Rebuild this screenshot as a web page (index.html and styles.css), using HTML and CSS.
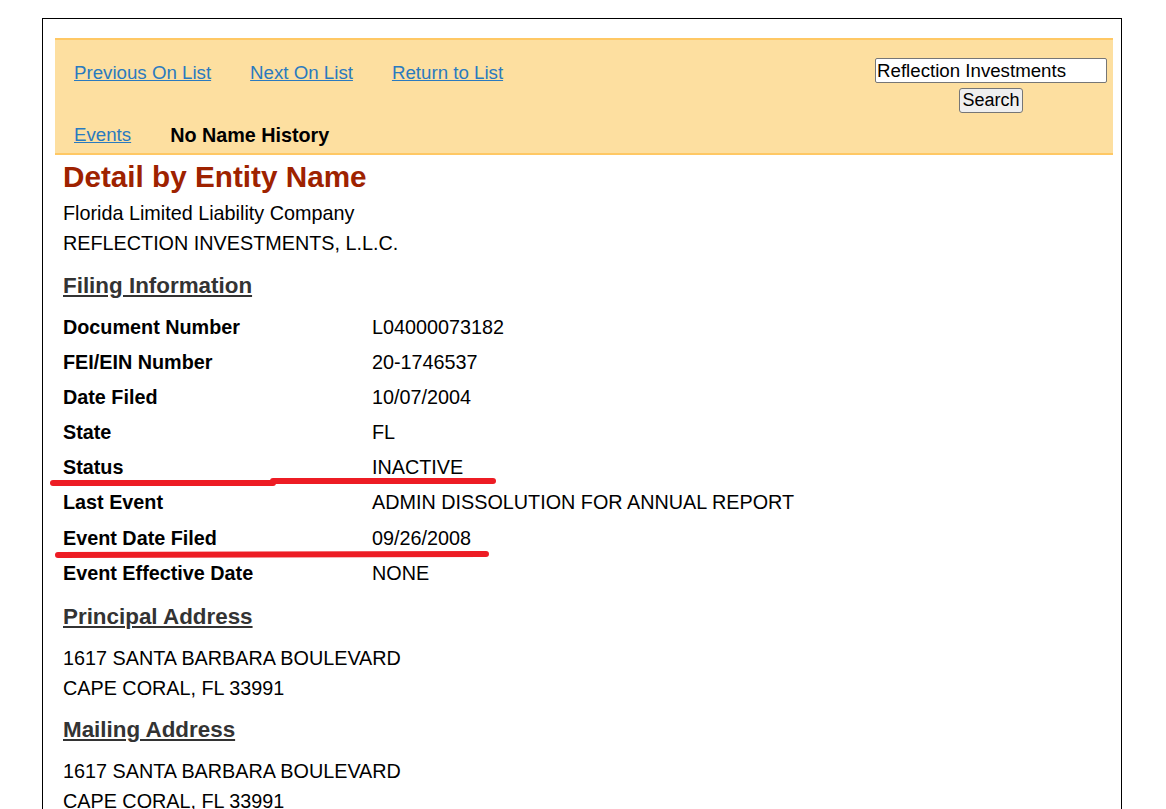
FILE: index.html
```html
<!DOCTYPE html>
<html>
	<head>
		<meta charset="UTF-8">
		<title>Detail by Entity Name</title>
		<link rel="stylesheet" href="styles.css">
	</head>
	<body>
		<div class="wrap">
			<div class="navbar">
				<div class="nav_row">
					<nav class="links">
						<a href="javascript:;">Previous On List</a>
						<a href="javascript:;">Next On List</a>
						<a href="javascript:;">Return to List</a>
					</nav>
					<form class="search" onsubmit="return false;">
						<input type="text" value="Reflection Investments">
						<button type="submit">Search</button>
					</form>
				</div>
				<div class="nav_row2">
					<a href="javascript:;">Events</a>
					<span>No Name History</span>
				</div>
			</div>
			<div class="detail">
				<h1>Detail by Entity Name</h1>
				<p class="sub">Florida Limited Liability Company<br>REFLECTION INVESTMENTS, L.L.C.</p>

				<h2>Filing Information</h2>
				<div class="rows">
					<div class="row"><span class="lbl">Document Number</span><span>L04000073182</span></div>
					<div class="row"><span class="lbl">FEI/EIN Number</span><span>20-1746537</span></div>
					<div class="row"><span class="lbl">Date Filed</span><span>10/07/2004</span></div>
					<div class="row"><span class="lbl">State</span><span>FL</span></div>
					<div class="row"><span class="lbl">Status</span><span>INACTIVE</span></div>
					<div class="row"><span class="lbl">Last Event</span><span>ADMIN DISSOLUTION FOR ANNUAL REPORT</span></div>
					<div class="row"><span class="lbl">Event Date Filed</span><span>09/26/2008</span></div>
					<div class="row"><span class="lbl">Event Effective Date</span><span>NONE</span></div>
				</div>

				<h2 class="sec">Principal Address</h2>
				<p class="addr">1617 SANTA BARBARA BOULEVARD<br>CAPE CORAL, FL 33991</p>

				<h2 class="sec sec2">Mailing Address</h2>
				<p class="addr">1617 SANTA BARBARA BOULEVARD<br>CAPE CORAL, FL 33991</p>
			</div>
		</div>
		<!-- red marker strokes drawn over the page -->
		<svg class="marks" width="1166" height="809" viewBox="0 0 1166 809">
			<line x1="53" y1="483" x2="273" y2="483"/>
			<line x1="273" y1="481" x2="493" y2="481"/>
			<line x1="58" y1="555" x2="486" y2="554"/>
		</svg>
	</body>
</html>
```

FILE: styles.css
```css
body,
h1,
h2,
p {
    margin: 0;
    padding: 0;
}

body {
    position: relative;
    font-family: "Liberation Sans", Arial, sans-serif;
    color: #000;
    overflow: hidden;
}

.wrap {
    width: 1080px;
    min-height: 900px;
    margin: 18px 0 0 42px;
    border: 1px solid #000;
    padding: 19px 8px 0 12px;
    box-sizing: border-box;
}

.navbar {
    background: #FDDFA0;
    border-top: 2px solid #FFC864;
    border-bottom: 2px solid #FFC864;
    padding: 18px 6px 7px 19px;
}

.nav_row {
    display: flex;
    justify-content: space-between;
    align-items: flex-start;
}

.links {
    display: flex;
    gap: 39px;
    padding-top: 4px;
}

.links a,
.nav_row2 a {
    font-size: 18.7px;
    line-height: 22px;
    color: #2A7ABF;
    text-decoration: underline;
}

.search {
    display: flex;
    flex-direction: column;
    align-items: center;
    gap: 5px;
}

.search input {
    width: 232px;
    height: 25px;
    box-sizing: border-box;
    border: 1px solid #767676;
    border-radius: 2px;
    padding: 0 1px;
    font: 18.7px "Liberation Sans", Arial, sans-serif;
    color: #000;
}

.search button {
    height: 25px;
    padding: 0 2px;
    border: 1px solid #767676;
    border-radius: 3px;
    background: #EFEFEF;
    font: 18px "Liberation Sans", Arial, sans-serif;
    color: #000;
}

.nav_row2 {
    display: flex;
    gap: 39px;
    margin-top: 11px;
    line-height: 22px;
}

.nav_row2 span {
    font-size: 19.75px;
    font-weight: bold;
}

.detail {
    padding-left: 8px;
}

.detail h1 {
    margin-top: 5px;
    font-size: 29.7px;
    line-height: 34px;
    color: #9E2200;
}

.sub {
    margin-top: 4px;
    font-size: 19.8px;
    line-height: 30px;
}

.detail h2 {
    margin-top: 13px;
    font-size: 22.4px;
    line-height: 30px;
    color: #333;
    text-decoration: underline;
}

.detail h2.sec {
    margin-top: 11px;
}

.detail h2.sec2 {
    margin-top: 12px;
}

.rows {
    margin-top: 9px;
}

.row {
    display: flex;
    font-size: 19.8px;
    line-height: 35.1px;
}

.row .lbl {
    width: 309px;
    font-weight: bold;
}

.addr {
    margin-top: 11px;
    font-size: 19.8px;
    line-height: 30px;
}

.marks {
    position: absolute;
    top: 0;
    left: 0;
    pointer-events: none;
}

.marks line {
    stroke: #ED1C24;
    stroke-width: 6;
    stroke-linecap: round;
}
```
